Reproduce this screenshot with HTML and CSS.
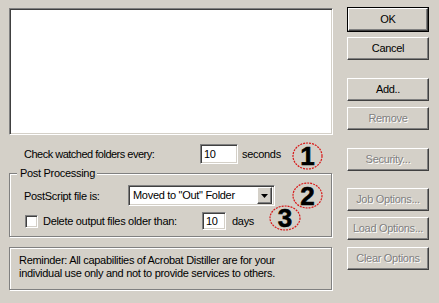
FILE: index.html
```html
<!DOCTYPE html>
<html>
<head>
<meta charset="utf-8">
<link rel="stylesheet" href="styles.css">
</head>
<body>
<div class="dialog">
  <div class="left">
    <div class="listbox sunken"></div>
    <div class="row row-check">
      <span class="lbl lbl-check">Check watched folders every:</span>
      <span class="field sunken field-secs">10</span>
      <span class="unit">seconds</span>
    </div>
    <div class="group etched">
      <span class="legend">Post Processing</span>
      <div class="row row-ps">
        <span class="lbl lbl-ps">PostScript file is:</span>
        <div class="select sunken">
          <span class="select-text">Moved to "Out" Folder</span>
          <span class="drop raised"><svg width="7" height="4" viewBox="0 0 7 4"><path d="M0 0h7L3.5 4z" fill="#000"/></svg></span>
        </div>
      </div>
      <div class="row row-del">
        <span class="checkbox sunken"></span>
        <span class="lbl lbl-del">Delete output files older than:</span>
        <span class="field sunken field-days">10</span>
        <span class="unit unit-days">days</span>
      </div>
    </div>
    <div class="reminder etched">
      Reminder: All capabilities of Acrobat Distiller are for your<br>
      individual use only and not to provide services to others.
    </div>
  </div>
  <div class="right">
    <div class="btn btn-default"><span class="btn-inner raised">OK</span></div>
    <div class="btn raised b-cancel">Cancel</div>
    <div class="btn raised b-add">Add..</div>
    <div class="btn raised disabled b-remove">Remove</div>
    <div class="btn raised disabled b-security">Security...</div>
    <div class="btn raised disabled b-job">Job Options...</div>
    <div class="btn raised disabled b-load">Load Options...</div>
    <div class="btn raised disabled b-clear">Clear Options</div>
  </div>

  <div class="mark mark1"><svg width="31" height="28" viewBox="0 0 31 28"><ellipse cx="15.5" cy="14" rx="14.5" ry="13" fill="none" stroke="#d81818" stroke-width="1.2" stroke-dasharray="2 1"/></svg><span class="num">1</span></div>
  <div class="mark mark2"><svg width="31" height="27" viewBox="0 0 31 27"><ellipse cx="15.5" cy="13.5" rx="14.5" ry="12.5" fill="none" stroke="#d81818" stroke-width="1.2" stroke-dasharray="2 1"/></svg><span class="num">2</span></div>
  <div class="mark mark3"><svg width="32" height="26" viewBox="0 0 32 26"><ellipse cx="16" cy="13" rx="15" ry="12" fill="none" stroke="#d81818" stroke-width="1.2" stroke-dasharray="2 1"/></svg><span class="num">3</span></div>
</div>
</body>
</html>
```

FILE: styles.css
```css
html, body {
  margin: 0;
  padding: 0;
  background: #d4d0c8;
}
body {
  width: 439px;
  height: 303px;
  overflow: hidden;
  font-family: "Liberation Sans", Arial, sans-serif;
  font-size: 11px;
  letter-spacing: -0.3px;
  color: #000;
}
.dialog {
  position: relative;
  display: flex;
  align-items: flex-start;
  padding-left: 9px;
  height: 303px;
  box-sizing: border-box;
}
.left {
  width: 324px;
  margin-top: 8px;
  display: flex;
  flex-direction: column;
}
.right {
  margin-left: 14px;
  width: 82px;
  margin-top: 7px;
  display: flex;
  flex-direction: column;
}

/* 3D borders */
.sunken {
  box-sizing: border-box;
  border: 1px solid;
  border-color: #808080 #fff #fff #808080;
  box-shadow: inset 1px 1px 0 #404040, inset -1px -1px 0 #d4d0c8;
  background: #fff;
}
.raised {
  box-sizing: border-box;
  border: 1px solid;
  border-color: #fff #404040 #404040 #fff;
  box-shadow: inset -1px -1px 0 #808080, inset 1px 1px 0 #d4d0c8;
  background: #d4d0c8;
}
.etched {
  box-sizing: border-box;
  border: 1px solid #808080;
  box-shadow: inset 1px 1px 0 #fff, 1px 1px 0 #fff;
}

.listbox {
  height: 127px;
}

.row {
  display: flex;
  align-items: center;
}
.row-check {
  margin-top: 9px;
  height: 20px;
}
.lbl-check {
  padding-left: 15px;
  width: 191px;
  box-sizing: border-box;
  letter-spacing: -0.5px;
}
.field {
  height: 20px;
  padding: 3px 0 0 3px;
  line-height: 13px;
}
.field-secs {
  width: 38px;
}
.unit {
  margin-left: 4px;
}

.group {
  position: relative;
  margin-top: 9px;
  width: 323px;
  height: 64px;
  padding: 11px 0 0 0;
}
.legend {
  position: absolute;
  left: 7px;
  top: -7px;
  padding: 0 2px 0 3px;
  background: #d4d0c8;
  line-height: 13px;
}
.row-ps {
  height: 21px;
}
.lbl-ps {
  padding-left: 14px;
  width: 118px;
  box-sizing: border-box;
}
.select {
  width: 147px;
  height: 21px;
  display: flex;
  align-items: center;
  justify-content: space-between;
  padding: 0 2px 0 4px;
}
.select-text {
  line-height: 13px;
}
.drop {
  width: 15px;
  height: 17px;
  display: flex;
  align-items: center;
  justify-content: center;
}
.row-del {
  margin-top: 6px;
  height: 18px;
}
.checkbox {
  width: 13px;
  height: 13px;
  margin-left: 15px;
}
.lbl-del {
  margin-left: 5px;
  width: 159px;
}
.field-days {
  width: 24px;
  height: 18px;
  padding-top: 2px;
}
.unit-days {
  margin-left: 6px;
}

.reminder {
  margin-top: 10px;
  width: 323px;
  height: 43px;
  padding: 6px 0 0 9px;
  line-height: 13px;
}

/* buttons */
.btn {
  box-sizing: border-box;
  width: 82px;
  height: 23px;
  display: flex;
  align-items: center;
  justify-content: center;
  line-height: 13px;
}
.btn-default {
  height: 25px;
  border: 1px solid #000;
}
.btn-inner {
  width: 100%;
  height: 100%;
  display: flex;
  align-items: center;
  justify-content: center;
}
.disabled {
  color: #808080;
  text-shadow: 1px 1px 0 #fff;
}
.b-cancel { margin-top: 5px; }
.b-add { margin-top: 18px; }
.b-remove { margin-top: 6px; }
.b-security { margin-top: 18px; }
.b-job { margin-top: 17px; }
.b-load { margin-top: 6px; }
.b-clear { margin-top: 7px; }

/* annotation marks */
.mark {
  position: absolute;
  display: flex;
  align-items: center;
  justify-content: center;
}
.mark svg {
  position: absolute;
  left: 0;
  top: 0;
}
.num {
  position: relative;
  font-family: "Liberation Sans", Arial, sans-serif;
  font-weight: bold;
  font-size: 26px;
  line-height: 26px;
  letter-spacing: 0;
  color: #000;
  -webkit-text-stroke: 0.6px #000;
}
.mark1 { left: 292px; top: 142px; width: 31px; height: 28px; }
.mark2 { left: 292px; top: 182px; width: 31px; height: 27px; }
.mark3 { left: 269px; top: 205px; width: 32px; height: 26px; }
```
